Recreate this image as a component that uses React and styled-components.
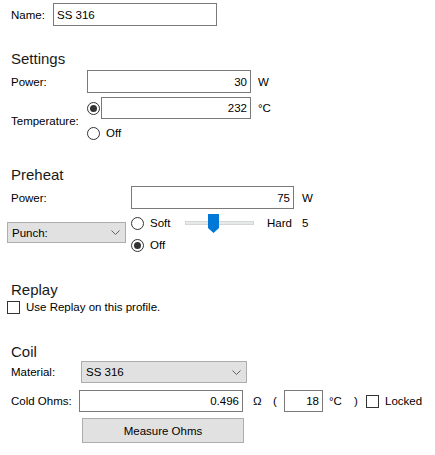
import React from "react";
import styled, { createGlobalStyle } from "styled-components";

const GlobalStyle = createGlobalStyle`
  body {
    margin: 0;
    background: #fff;
    font-family: "Liberation Sans", Arial, sans-serif;
    font-size: 11.5px;
    color: #000;
  }
`;

const Window = styled.div`
  width: 435px;
  height: 455px;
  box-sizing: border-box;
  padding-top: 3px;
  overflow: hidden;
`;

//rows and labels
const Row = styled.div`
  display: flex;
  align-items: center;
  height: ${(p) => p.$h || 23}px;
  padding-left: ${(p) => p.$indent ?? 11}px;
  margin-top: ${(p) => p.$mt || 0}px;
`;

const Label = styled.span`
  width: ${(p) => p.$w}px;
  flex: none;
  white-space: nowrap;
`;

const Unit = styled.span`
  margin-left: ${(p) => p.$ml ?? 7}px;
  width: ${(p) => (p.$w ? `${p.$w}px` : "auto")};
  flex: none;
  white-space: nowrap;
`;

const Heading = styled.h2`
  margin: ${(p) => p.$mt || 0}px 0 0 0;
  padding-left: 11px;
  font-size: 15px;
  line-height: 18px;
  font-weight: normal;
  color: #1a1a1a;
`;

//inputs
const TextBox = styled.input`
  box-sizing: border-box;
  width: ${(p) => p.$w}px;
  height: ${(p) => p.$h || 23}px;
  margin: 0;
  margin-left: ${(p) => p.$ml || 0}px;
  padding: 0 3px;
  border: 1px solid #7a7a7a;
  background: #fff;
  font: inherit;
  color: #000;
  text-align: ${(p) => (p.$right ? "right" : "left")};
  outline: none;
`;

const Combo = styled.div`
  box-sizing: border-box;
  width: ${(p) => p.$w}px;
  height: ${(p) => p.$h || 22}px;
  margin-left: ${(p) => p.$ml || 0}px;
  padding: 0 5px 0 4px;
  display: flex;
  align-items: center;
  justify-content: space-between;
  background: #e1e1e1;
  border: 1px solid #adadad;
  flex: none;
`;

const Button = styled.div`
  box-sizing: border-box;
  width: 162px;
  height: 25px;
  display: flex;
  align-items: center;
  justify-content: center;
  background: #e1e1e1;
  border: 1px solid #adadad;
`;

const RadioDot = styled.span`
  box-sizing: border-box;
  width: 13px;
  height: 13px;
  flex: none;
  border-radius: 50%;
  border: 1px solid #333;
  display: flex;
  align-items: center;
  justify-content: center;

  &::after {
    content: "";
    width: 7px;
    height: 7px;
    border-radius: 50%;
    background: ${(p) => (p.$on ? "#333" : "transparent")};
  }
`;

const Check = styled.span`
  box-sizing: border-box;
  width: 13px;
  height: 13px;
  flex: none;
  border: 1px solid #333;
  background: #fff;
  margin-right: ${(p) => p.$mr || 0}px;
  margin-left: ${(p) => p.$ml || 0}px;
`;

//option blocks: label column on the left, stacked rows on the right
const Block = styled.div`
  display: grid;
  grid-template-columns: ${(p) => p.$lead}px auto;
  padding-left: ${(p) => p.$indent ?? 11}px;
  margin-top: ${(p) => p.$mt || 0}px;
`;

const BlockSide = styled.div`
  align-self: ${(p) => (p.$top ? "start" : "center")};
  margin-top: ${(p) => p.$top || 0}px;
`;

const Stack = styled.div`
  display: flex;
  flex-direction: column;
  gap: ${(p) => p.$gap || 0}px;
`;

const OptRow = styled.div`
  display: flex;
  align-items: center;
  height: 22px;
`;

const OptText = styled.span`
  margin-left: 6px;
  width: ${(p) => (p.$w ? `${p.$w}px` : "auto")};
  flex: none;
`;

//trackbar
const Slider = styled.div`
  position: relative;
  width: 69px;
  height: 19px;
  display: flex;
  align-items: center;
  flex: none;
`;

const Track = styled.div`
  width: 100%;
  height: 4px;
  box-sizing: border-box;
  background: #e7eaea;
  border: 1px solid #d6d6d6;
`;

const Thumb = styled.svg`
  position: absolute;
  left: ${(p) => p.$x}px;
  top: 0;
`;

const Chevron = () => (
  <svg width="9" height="5" viewBox="0 0 9 5">
    <path d="M0.5 0.5 L4.5 4.5 L8.5 0.5" fill="none" stroke="#606060" strokeWidth="1" />
  </svg>
);

const Radio = ({ on, children, w }) => (
  <OptRow>
    <RadioDot $on={on} />
    {children !== undefined && <OptText $w={w}>{children}</OptText>}
  </OptRow>
);

export default function App() {
  return (
    <Window>
      <GlobalStyle />

      <Row>
        <Label $w={42}>Name:</Label>
        <TextBox $w={164} defaultValue="SS 316" readOnly />
      </Row>

      <Heading $mt={24}>Settings</Heading>
      <Row $mt={2}>
        <Label $w={76}>Power:</Label>
        <TextBox $w={164} $right defaultValue="30" readOnly />
        <Unit>W</Unit>
      </Row>
      <Block $lead={76} $mt={4}>
        <BlockSide>Temperature:</BlockSide>
        <Stack $gap={3}>
          <OptRow>
            <RadioDot $on />
            <TextBox $w={150} $h={22} $ml={1} $right defaultValue="232" readOnly />
            <Unit>°C</Unit>
          </OptRow>
          <Radio>Off</Radio>
        </Stack>
      </Block>

      <Heading $mt={22}>Preheat</Heading>
      <Row $mt={2}>
        <Label $w={120}>Power:</Label>
        <TextBox $w={163} $right defaultValue="75" readOnly />
        <Unit $ml={8}>W</Unit>
      </Row>
      <Block $lead={124} $indent={7} $mt={3}>
        <BlockSide $top={10}>
          <Combo $w={119} $h={21}>
            <span>Punch:</span>
            <Chevron />
          </Combo>
        </BlockSide>
        <Stack>
          <OptRow>
            <RadioDot />
            <OptText $w={35}>Soft</OptText>
            <Slider>
              <Track />
              <Thumb $x={23} width="11" height="19" viewBox="0 0 11 19">
                <polygon points="0,0 11,0 11,14 5.5,19 0,14" fill="#0078d7" />
              </Thumb>
            </Slider>
            <Unit $ml={13} $w={35}>Hard</Unit>
            <Unit $ml={0}>5</Unit>
          </OptRow>
          <Radio on>Off</Radio>
        </Stack>
      </Block>

      <Heading $mt={25}>Replay</Heading>
      <Row $h={16} $indent={7}>
        <Check $mr={6} />
        <span>Use Replay on this profile.</span>
      </Row>

      <Heading $mt={28}>Coil</Heading>
      <Row $h={22}>
        <Label $w={70}>Material:</Label>
        <Combo $w={166}>
          <span>SS 316</span>
          <Chevron />
        </Combo>
      </Row>
      <Row $h={22} $mt={7}>
        <Label $w={68}>Cold Ohms:</Label>
        <TextBox $w={164} $h={22} $right defaultValue="0.496" readOnly />
        <Unit $ml={10} $w={9}>Ω</Unit>
        <Unit $ml={11} $w={4}>(</Unit>
        <TextBox $w={39} $h={22} $ml={7} $right defaultValue="18" readOnly />
        <Unit $ml={6} $w={14}>°C</Unit>
        <Unit $ml={11} $w={4}>)</Unit>
        <Check $ml={8} $mr={6} />
        <span>Locked</span>
      </Row>
      <Row $h={25} $mt={6} $indent={82}>
        <Button>Measure Ohms</Button>
      </Row>
    </Window>
  );
}
